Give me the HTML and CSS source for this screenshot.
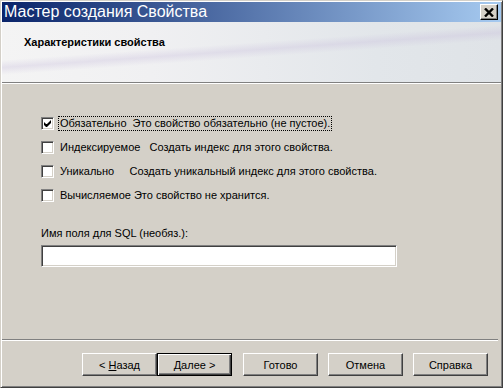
FILE: index.html
```html
<!DOCTYPE html>
<html>
<head>
    <title>Мастер создания Свойства</title>
    <link rel="stylesheet" href="styles.css">
</head>
<body>
    <div class="window">
        <div class="titlebar">
            <div class="title">Мастер создания Свойства</div>
            <div class="caption-close">
                <svg class="caption-x" width="10" height="9" viewBox="0 0 10 9">
                    <path d="M1 0.5L9 8.5M9 0.5L1 8.5" stroke="#000000" stroke-width="2.4" fill="none"/>
                </svg>
            </div>
        </div>

        <div class="header">
            <div class="header-title">Характеристики свойства</div>
        </div>
        <div class="separator"></div>

        <div class="content">
            <label class="option">
                <span class="checkbox checked">
                    <svg width="7" height="7" viewBox="0 0 7 7">
                        <path d="M0 2v3l2 2h1l4-4v-3l-4 4h-1z" fill="#000"/>
                    </svg>
                </span>
                <span class="option-text focused">Обязательно  Это свойство обязательно (не пустое).</span>
            </label>
            <label class="option">
                <span class="checkbox"></span>
                <span class="option-text">Индексируемое   Создать индекс для этого свойства.</span>
            </label>
            <label class="option">
                <span class="checkbox"></span>
                <span class="option-text">Уникально     Создать уникальный индекс для этого свойства.</span>
            </label>
            <label class="option option-last">
                <span class="checkbox"></span>
                <span class="option-text">Вычисляемое Это свойство не хранится.</span>
            </label>

            <div class="field">
                <div class="field-label">Имя поля для SQL (необяз.):</div>
                <div class="textbox"></div>
            </div>
        </div>

        <div class="separator separator-bottom"></div>
        <div class="footer">
            <span class="button"><span>&lt; <u>Н</u>азад</span></span>
            <span class="button default"><span><u>Д</u>алее &gt;</span></span>
            <span class="button gap">Готово</span>
            <span class="button gap">Отмена</span>
            <span class="button gap">Справка</span>
        </div>
    </div>
</body>
</html>
```

FILE: styles.css
```css
body {
    margin: 0;
    padding: 0;
    background-color: #d4d0c8;
    font-family: "Liberation Sans", Arial, sans-serif;
    font-size: 11px;
    color: #000;
}

.window {
    width: 503px;
    height: 388px;
    box-sizing: border-box;
    display: flex;
    flex-direction: column;
    padding: 1px;
    background-color: #d4d0c8;
    border: 1px solid;
    border-color: #d4d0c8 #404040 #404040 #d4d0c8;
    box-shadow: inset 1px 1px 0 #fff, inset -1px -1px 0 #808080;
}

.titlebar {
    height: 20px;
    flex-shrink: 0;
    display: flex;
    align-items: center;
    justify-content: space-between;
    padding: 0 3px 0 2px;
    background: linear-gradient(to right, #0a246a, #a6caf0);
    color: #fff;
}

.title {
    font-size: 16px;
    line-height: 20px;
    white-space: nowrap;
}

.caption-close {
    width: 18px;
    height: 16px;
    box-sizing: border-box;
    flex: 0 0 18px;
    display: flex;
    align-items: center;
    justify-content: center;
    background-color: #d4d0c8;
    border: 1px solid;
    border-color: #ffffff #000000 #000000 #ffffff;
    box-shadow: inset -1px -1px 0 #808080;
}

.caption-x {
    display: block;
}

.header {
    height: 60px;
    flex-shrink: 0;
    box-sizing: border-box;
    padding: 14px 0 0 22px;
    background:
        linear-gradient(176deg, transparent 40%, rgba(200, 190, 220, 0.35) 48%, transparent 56%),
        linear-gradient(to right, #f4f4f4 0%, #f0f0f2 30%, #e2e6ea 75%, #dfe3e7 100%);
}

.header-title {
    font-weight: bold;
    font-size: 11px;
    line-height: 13px;
}

.separator {
    height: 0;
    flex-shrink: 0;
    border-top: 1px solid #808080;
    border-bottom: 1px solid #fff;
}

.separator-bottom {
    margin-right: 3px;
}

.content {
    flex: 1;
    padding: 33px 0 0 39px;
}

.option {
    display: flex;
    align-items: center;
    height: 13px;
    margin-bottom: 11px;
}

.option-last {
    margin-top: 2px;
}

.checkbox {
    width: 13px;
    height: 13px;
    box-sizing: border-box;
    display: flex;
    align-items: center;
    justify-content: center;
    background-color: #fff;
    border: 1px solid;
    border-color: #808080 #fff #fff #808080;
    box-shadow: inset 1px 1px 0 #404040, inset -1px -1px 0 #d4d0c8;
    flex-shrink: 0;
}

.option-text {
    margin-left: 4px;
    padding: 0 1px;
    line-height: 13px;
    white-space: pre;
    border: 1px dotted transparent;
}

.option-text.focused {
    border-color: #000;
}

.field {
    margin-top: 25px;
}

.field-label {
    line-height: 13px;
    margin-bottom: 5px;
}

.textbox {
    width: 356px;
    height: 22px;
    box-sizing: border-box;
    background-color: #fff;
    border: 1px solid;
    border-color: #808080 #fff #fff #808080;
    box-shadow: inset 1px 1px 0 #404040, inset -1px -1px 0 #d4d0c8;
}

.footer {
    height: 45px;
    flex-shrink: 0;
    display: flex;
    padding: 12px 0 0 80px;
    box-sizing: border-box;
}

.button {
    width: 75px;
    height: 23px;
    box-sizing: border-box;
    display: flex;
    align-items: center;
    justify-content: center;
    white-space: pre;
    background-color: #d4d0c8;
    border: 1px solid;
    border-color: #fff #404040 #404040 #fff;
    box-shadow: inset -1px -1px 0 #808080;
}

.button.default {
    border: 1px solid #000;
    box-shadow: inset 1px 1px 0 #fff, inset -1px -1px 0 #404040, inset -2px -2px 0 #808080;
}

.button.gap {
    margin-left: 11px;
}

.button.gap + .button.gap {
    margin-left: 10px;
}
```
